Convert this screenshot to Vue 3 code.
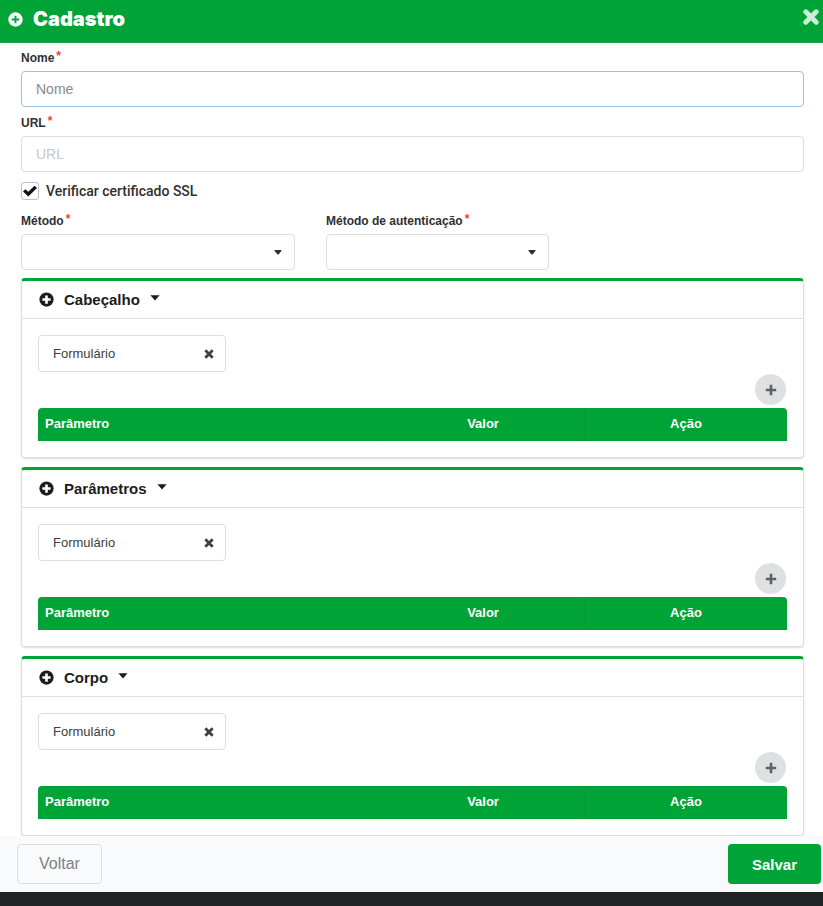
<script setup>
import { ref } from 'vue'

const nome = ref('')
const url = ref('')
const verifySsl = ref(true)
const metodo = ref('')
const autenticacao = ref('')

const sections = ref([
  { id: 'cabecalho', title: 'Cabeçalho', type: 'Formulário' },
  { id: 'parametros', title: 'Parâmetros', type: 'Formulário' },
  { id: 'corpo', title: 'Corpo', type: 'Formulário' }
])
</script>

<template>
  <div class="page">
    <main class="modal">
      <header class="modal-header">
        <svg class="title-icon" viewBox="0 0 16 16" aria-hidden="true">
          <circle cx="8" cy="8" r="7.7" fill="#fff" />
          <path d="M8 4v8M4 8h8" stroke="#00a335" stroke-width="2" />
        </svg>
        <h1>Cadastro</h1>
        <button class="close" type="button" aria-label="Fechar">
          <svg viewBox="0 0 16 16" aria-hidden="true">
            <path d="M2.8 2.8l10.4 10.4M13.2 2.8L2.8 13.2" stroke="currentColor" stroke-width="5" stroke-linecap="round" />
          </svg>
        </button>
      </header>

      <form id="cadastro" class="modal-body" @submit.prevent>
        <div class="field">
          <label for="nome">Nome<span class="required">*</span></label>
          <input id="nome" v-model="nome" class="control focused" type="text" placeholder="Nome" />
        </div>
        <div class="field">
          <label for="url">URL<span class="required">*</span></label>
          <input id="url" v-model="url" class="control" type="text" placeholder="URL" />
        </div>

        <div class="check-row">
          <input id="ssl" v-model="verifySsl" type="checkbox" />
          <label for="ssl">Verificar certificado SSL</label>
        </div>

        <div class="field-grid">
          <div class="field">
            <label for="metodo">Método<span class="required">*</span></label>
            <div class="select">
              <select id="metodo" v-model="metodo" class="control">
                <option value=""></option>
              </select>
              <svg class="caret" viewBox="0 0 8 5" aria-hidden="true">
                <path d="M1 0h6q1 0 .4 .9L4.7 4.2q-.7 .7-1.4 0L.6 .9Q0 0 1 0z" fill="currentColor" />
              </svg>
            </div>
          </div>
          <div class="field">
            <label for="autenticacao">Método de autenticação<span class="required">*</span></label>
            <div class="select">
              <select id="autenticacao" v-model="autenticacao" class="control">
                <option value=""></option>
              </select>
              <svg class="caret" viewBox="0 0 8 5" aria-hidden="true">
                <path d="M1 0h6q1 0 .4 .9L4.7 4.2q-.7 .7-1.4 0L.6 .9Q0 0 1 0z" fill="currentColor" />
              </svg>
            </div>
          </div>
        </div>

        <section v-for="section in sections" :key="section.id" class="card">
          <h2>
            <button class="card-toggle" type="button" aria-expanded="true">
              <svg class="card-icon" viewBox="0 0 16 16" aria-hidden="true">
                <circle cx="8" cy="8" r="7.6" fill="#1b1c1d" />
                <path d="M8 3.6v8.8M3.6 8h8.8" stroke="#fff" stroke-width="2.8" />
              </svg>
              <span>{{ section.title }}</span>
              <svg class="card-caret" viewBox="0 0 10 6" aria-hidden="true">
                <path d="M.4 .3h9.2L5 5.6z" fill="currentColor" />
              </svg>
            </button>
          </h2>
          <div class="card-body">
            <div class="select type-select">
              <select v-model="section.type" class="control" :aria-label="`Tipo de ${section.title}`">
                <option value=""></option>
                <option>Formulário</option>
              </select>
              <button class="clear" type="button" aria-label="Limpar" @click="section.type = ''">
                <svg viewBox="0 0 10 10" aria-hidden="true">
                  <path d="M1.3 1.3l7.4 7.4M8.7 1.3l-7.4 7.4" stroke="currentColor" stroke-width="2.8" />
                </svg>
              </button>
            </div>
            <button class="add" type="button" aria-label="Adicionar">
              <svg viewBox="0 0 12 12" aria-hidden="true">
                <path d="M6 .8v10.4M.8 6h10.4" stroke="currentColor" stroke-width="2.6" />
              </svg>
            </button>
            <table>
              <thead>
                <tr>
                  <th class="col-name">Parâmetro</th>
                  <th>Valor</th>
                  <th>Ação</th>
                </tr>
              </thead>
            </table>
          </div>
        </section>
      </form>

      <footer class="modal-footer">
        <button class="back" type="button">Voltar</button>
        <button class="save" type="submit" form="cadastro">Salvar</button>
      </footer>
    </main>
  </div>
</template>

<style>
body {
  background: #222325;
}
</style>

<style scoped>
.page,
.page * {
  box-sizing: border-box;
}

.page {
  height: 100vh;
  padding-bottom: 14px;
  font-family: "Liberation Sans", Arial, sans-serif;
  color: #2f3031;
}

button,
input,
select {
  font-family: inherit;
}

button {
  padding: 0;
  border: 0;
  background: none;
  color: inherit;
  cursor: pointer;
}

svg {
  display: block;
}

.modal {
  display: flex;
  flex-direction: column;
  height: 100%;
  background: #fff;
}

.modal-header {
  display: flex;
  align-items: center;
  flex: none;
  height: 43px;
  padding: 0 4px 4px 8px;
  border-bottom: 1px solid #21a04a;
  background: #00a335;
  color: #fff;
}

.title-icon {
  width: 15px;
  height: 15px;
}

h1 {
  margin: 0 auto 0 10px;
  font-family: Inter, "Liberation Sans", sans-serif;
  font-size: 20px;
  font-weight: 900;
  line-height: 24px;
}

.close {
  margin-bottom: 4px;
  color: #ccedd7;
}

.close svg {
  width: 16px;
  height: 16px;
}

.modal-body {
  flex: 1;
  min-height: 0;
  padding: 7px 19px 0 21px;
  overflow-y: auto;
  scrollbar-width: none;
}

.field {
  margin-bottom: 8px;
}

.field label {
  display: block;
  margin-bottom: 5px;
  font-size: 12px;
  font-weight: 700;
  line-height: 16px;
}

.required {
  margin-left: 2px;
  color: #e8403c;
  vertical-align: 2px;
  line-height: 12px;
}

.control {
  display: block;
  width: 100%;
  height: 36px;
  padding: 0 14px;
  border: 1px solid #dcdddd;
  border-radius: 4px;
  outline: none;
  background: #fff;
  color: #3c3d3e;
  font-size: 14px;
  appearance: none;
}

.control::placeholder {
  color: #c7c7c7;
  opacity: 1;
}

.control.focused {
  border-color: #96c3e0;
}

.control.focused::placeholder {
  color: #8a8a8a;
}

.check-row {
  display: flex;
  align-items: center;
  gap: 7px;
  padding: 2px 0 13px;
}

.check-row input {
  display: grid;
  place-items: center;
  width: 18px;
  height: 18px;
  margin: 0;
  border: 1px solid #bfc0c0;
  border-radius: 3px;
  background: #fff;
  appearance: none;
}

.check-row input:checked::before {
  content: "";
  width: 14px;
  height: 12px;
  background: #111;
  clip-path: polygon(0 54%, 17% 35%, 37% 56%, 83% 6%, 100% 24%, 38% 95%);
}

.check-row label {
  font-family: Roboto, "Liberation Sans", sans-serif;
  font-size: 14px;
  font-weight: 500;
  line-height: 18px;
}

.field-grid {
  display: grid;
  grid-template-columns: 38fr 31fr 31fr;
  column-gap: 31px;
}

.select {
  position: relative;
}

.caret {
  position: absolute;
  top: 16px;
  right: 13px;
  width: 8px;
  height: 5px;
  pointer-events: none;
}

.card {
  margin-bottom: 9px;
  border: 1px solid #dcdddd;
  border-top: 3px solid #00a335;
  border-radius: 4px;
  box-shadow: 0 1px 2px #dedede;
}

h2 {
  margin: 0;
  border-bottom: 1px solid #e0e0e0;
}

.card-toggle {
  display: flex;
  align-items: center;
  width: 100%;
  height: 37px;
  padding: 0 17px;
  color: #1b1c1d;
  font-size: 15px;
  font-weight: 700;
}

.card-icon {
  width: 15px;
  height: 15px;
  margin-right: 10px;
}

.card-caret {
  width: 10px;
  height: 6px;
  margin: 0 0 3px 10px;
}

.card-body {
  padding: 16px;
}

.type-select {
  width: 188px;
}

.type-select .control {
  height: 37px;
  font-size: 13px;
}

.clear {
  position: absolute;
  top: 14px;
  right: 12px;
  color: #3f4041;
}

.clear svg {
  width: 10px;
  height: 10px;
}

.add {
  display: grid;
  place-items: center;
  width: 31px;
  height: 31px;
  margin: 2px 1px 3px auto;
  border-radius: 50%;
  background: #dfe0e2;
  color: #606162;
}

.add svg {
  width: 12px;
  height: 12px;
}

table {
  width: 100%;
  table-layout: fixed;
  border-collapse: separate;
  border-spacing: 0;
  border-radius: 4px 4px 0 0;
  background: #00a335;
  color: #fff;
}

th {
  height: 33px;
  padding: 0 7px 2px;
  font-size: 13px;
  font-weight: 700;
}

th + th {
  border-left: 1px solid #0b9637;
}

.col-name {
  width: 45.8%;
  text-align: left;
}

.modal-footer {
  display: flex;
  align-items: center;
  justify-content: space-between;
  flex: none;
  height: 56px;
  padding: 0 2px 0 17px;
  background: #f9fafc;
}

.back {
  height: 40px;
  padding: 0 21px;
  border: 1px solid #dcdddd;
  border-radius: 4px;
  color: #808182;
  font-size: 16px;
}

.save {
  height: 40px;
  padding: 0 24px;
  border-radius: 4px;
  background: #00a335;
  color: #fff;
  font-size: 15px;
  font-weight: 700;
}
</style>
